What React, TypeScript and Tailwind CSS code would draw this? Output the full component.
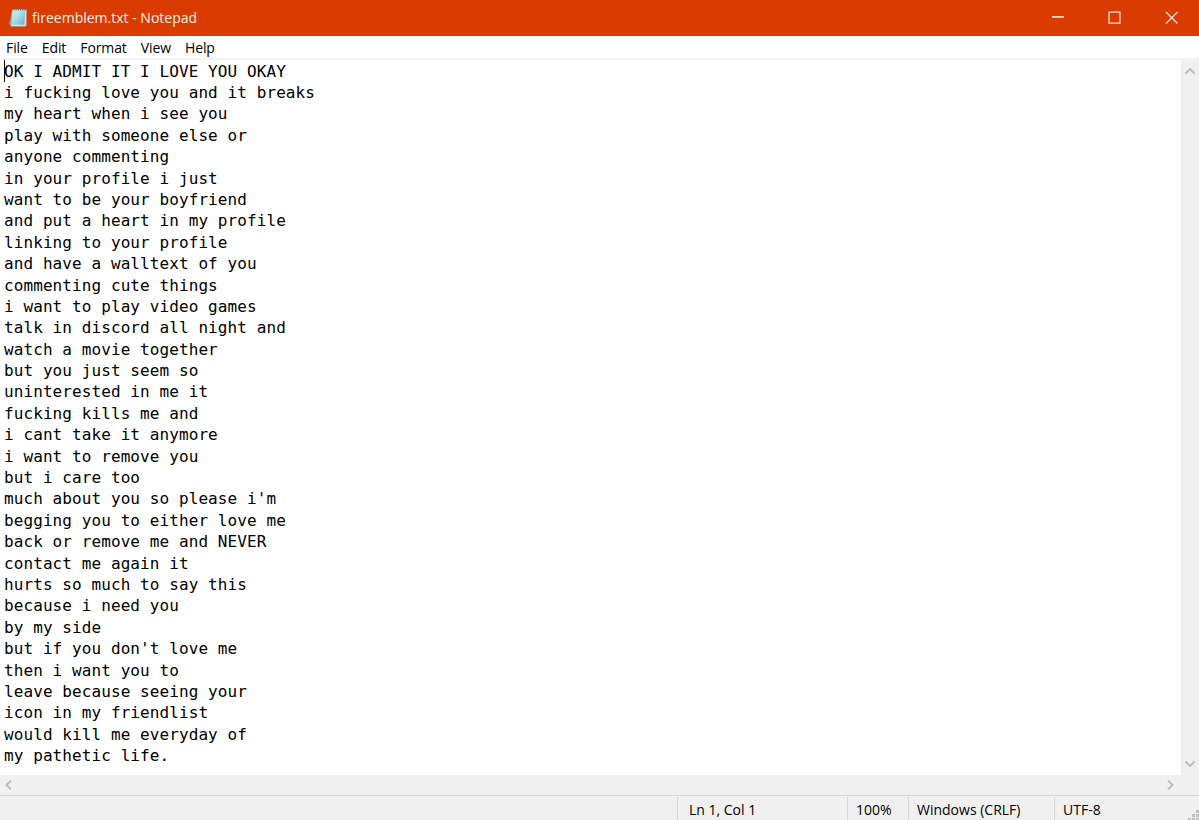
import type { FC, ReactNode } from 'react';

const lines = [
  'OK I ADMIT IT I LOVE YOU OKAY',
  'i fucking love you and it breaks',
  'my heart when i see you',
  'play with someone else or',
  'anyone commenting',
  'in your profile i just',
  'want to be your boyfriend',
  'and put a heart in my profile',
  'linking to your profile',
  'and have a walltext of you',
  'commenting cute things',
  'i want to play video games',
  'talk in discord all night and',
  'watch a movie together',
  'but you just seem so',
  'uninterested in me it',
  'fucking kills me and',
  'i cant take it anymore',
  'i want to remove you',
  'but i care too',
  "much about you so please i'm",
  'begging you to either love me',
  'back or remove me and NEVER',
  'contact me again it',
  'hurts so much to say this',
  'because i need you',
  'by my side',
  "but if you don't love me",
  'then i want you to',
  'leave because seeing your',
  'icon in my friendlist',
  'would kill me everyday of',
  'my pathetic life.',
];

const NotepadIcon: FC = () => (
  <svg width="20" height="20" viewBox="0 0 20 20">
    <defs>
      <linearGradient id="page" x1="0" y1="0" x2="1" y2="1">
        <stop offset="0" stopColor="#d5f3f8" />
        <stop offset="0.5" stopColor="#a5d9e5" />
        <stop offset="1" stopColor="#62aabd" />
      </linearGradient>
    </defs>
    <path d="M4 2.5 .8 16.5 4 17.5z" fill="#9c9288" />
    <path d="M4.2 1.5h14.3v16l-1 1H2.7z" fill="#b9c8bd" />
    <path d="M5 1.5h12.3l-.6 15.5H3.5z" fill="url(#page)" />
    <path d="M3.5 17.2h13.5l.8-14.5" fill="none" stroke="#e3eee4" />
    <path d="M5.5 1.5h12" stroke="#59666a" strokeWidth="2" strokeDasharray="1 1.2" />
  </svg>
);

const Chevron: FC<{ d: string }> = ({ d }) => (
  <svg width="12" height="12" viewBox="0 0 12 12" fill="none" stroke="#bdbdbd" strokeWidth="2">
    <path d={d} />
  </svg>
);

const StatusCell: FC<{ className: string; children?: ReactNode }> = ({ className, children }) => (
  <div className={`h-full shrink-0 border-l border-[#d7d7d7] pt-[3px] whitespace-nowrap ${className}`}>{children}</div>
);

const App: FC = () => (
  <div className="flex h-[820px] w-[1199px] flex-col overflow-hidden bg-white font-['Open_Sans','Noto_Sans',sans-serif] text-black">
    {/* Title bar */}
    <header className="flex h-9 shrink-0 items-center bg-[#da3b01] pl-2 text-white">
      <NotepadIcon />
      <h1 className="ml-1 text-sm text-[#fff0e8]">fireemblem.txt - Notepad</h1>
      <div className="ml-auto flex h-full items-center">
        <svg width="150" height="36" fill="none" stroke="#ffe3d8" strokeWidth="1.2">
          <path d="M3 16.9h12" strokeWidth="1.6" />
          <path d="M60 12.2h11v11H60z" />
          <path d="m117 12 11.5 11.5m0-11.5L117 23.5" />
        </svg>
      </div>
    </header>

    {/* Menu */}
    <nav className="flex h-[24px] shrink-0 items-center gap-[14px] border-b-2 border-[#f2f2f2] pt-[2px] pl-[6px] text-sm leading-5 tracking-[-0.1px]">
      <span>File</span>
      <span>Edit</span>
      <span>Format</span>
      <span>View</span>
      <span>Help</span>
    </nav>

    <div className="flex h-[715px] shrink-0">
      <main className="relative flex-1 pt-[0.6px] pl-1 font-['DejaVu_Sans_Mono',monospace] text-[16px] leading-[21.39px] tracking-[0.087px] whitespace-pre">
        <span className="absolute top-0 left-1 h-[22px] w-px bg-black" />
        {lines.map((line) => (
          <p key={line}>{line}</p>
        ))}
      </main>
      <div className="flex w-[18px] flex-col items-center justify-between bg-[#f0f0f0] pt-[5px] pb-[5px]">
        <Chevron d="M1.5 8.5 6 4l4.5 4.5" />
        <Chevron d="M1.5 3.5 6 8l4.5-4.5" />
      </div>
    </div>

    <div className="flex h-5 shrink-0 items-center justify-between bg-[#f0f0f0] pr-[23px] pb-px pl-[3px]">
      <Chevron d="M8 1.5 3.5 6 8 10.5" />
      <Chevron d="M4 1.5 8.5 6 4 10.5" />
    </div>

    {/* Status bar */}
    <footer className="relative flex h-[25px] shrink-0 justify-end border-t border-[#d7d7d7] bg-[#f0f0f0] pt-px text-sm leading-5">
      <StatusCell className="w-[170px] pl-[11px]">Ln 1, Col 1</StatusCell>
      <StatusCell className="w-[61px] pl-2">100%</StatusCell>
      <StatusCell className="w-[146px] pl-2">Windows (CRLF)</StatusCell>
      <StatusCell className="w-[145px] pl-2">UTF-8</StatusCell>
      <svg className="absolute right-0 bottom-0" width="11" height="10" fill="#bfbfbf">
        <path d="M8 0h3v3H8zM4 4h3v3H4zM8 4h3v3H8zM0 8h3v2H0zM4 8h3v2H4zM8 8h3v2H8z" />
      </svg>
    </footer>
  </div>
);

export default App;
